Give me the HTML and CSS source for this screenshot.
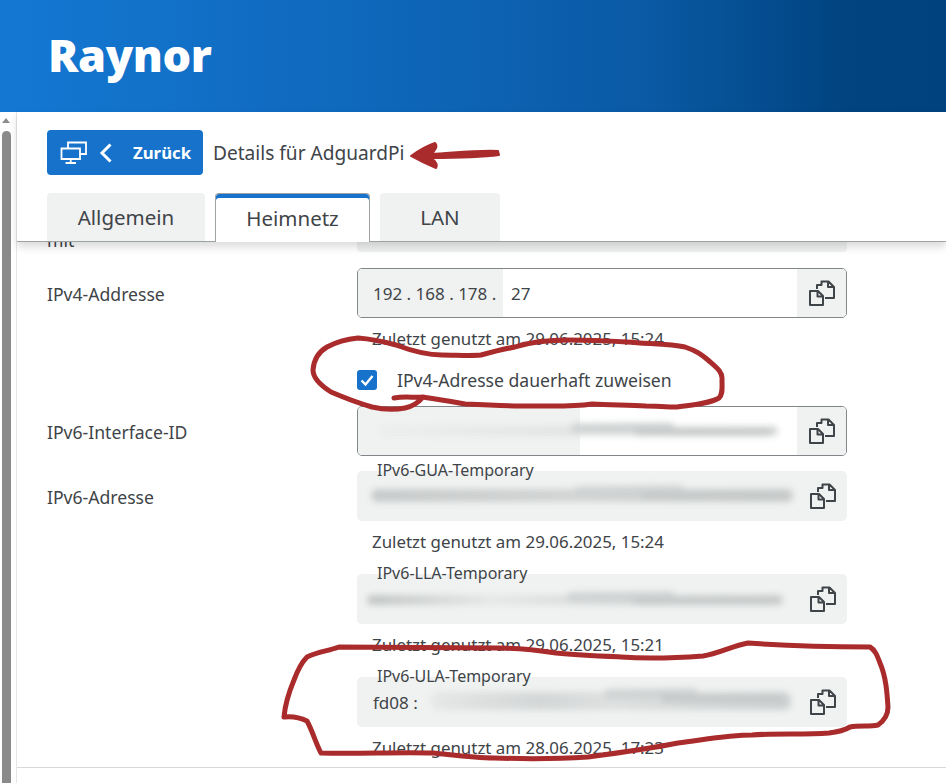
FILE: index.html
```html
<!DOCTYPE html>
<html lang="de">
<head>
<meta charset="utf-8">
<title>Raynor</title>
<link rel="stylesheet" href="styles.css">
</head>
<body>
<svg width="0" height="0" class="defs">
  <symbol id="copy" viewBox="0 0 28 26">
    <path d="M2 11h8l5 5v9H2z M9.500 11.500v5h5" fill="none" stroke="currentColor" stroke-width="2" stroke-linejoin="round"/>
    <path d="M9 9V5h4.500V1.500h7l5.500 5.500v11h-9 M20 2v5h5.500" fill="none" stroke="currentColor" stroke-width="2" stroke-linejoin="round"/>
  </symbol>
</svg>
<header class="banner"><h1 class="title">Raynor</h1></header>
<div class="page">
  <div class="scrollbar"><span class="arrow"></span><span class="thumb"></span></div>
  <main class="main">
    <div class="top">
      <div class="crumb">
        <button class="back" type="button">
          <svg class="net" viewBox="0 0 28 24" width="28" height="24"><path d="M8 7V1.500h18V13h-6 M1.500 7.500H20V18H1.500z M10.700 18v3.500 M5.500 22h10.500" fill="none" stroke="currentColor" stroke-width="1.800"/></svg>
          <svg class="chev" viewBox="0 0 14 20" width="14" height="20"><path d="M11.500 1.500 3 10l8.500 8.500" fill="none" stroke="currentColor" stroke-width="3"/></svg>
          <span class="back-text">Zurück</span>
        </button>
        <span class="crumb-text">Details für AdguardPi</span>
      </div>
      <nav class="tabs">
        <a class="tab tab-a">Allgemein</a>
        <a class="tab tab-b active">Heimnetz</a>
        <a class="tab tab-c">LAN</a>
      </nav>
    </div>
    <div class="scroll">
      <div class="row row-first">
        <div class="label">mit</div>
        <div class="col"><div class="stub"></div></div>
      </div>
      <div class="row">
        <div class="label">IPv4-Addresse</div>
        <div class="col">
          <div class="field outlined">
            <span class="prefix prefix-v4">192 . 168 . 178 .</span><span class="value">27</span>
            <span class="copy"><svg width="28" height="26"><use href="#copy"/></svg></span>
          </div>
          <div class="hint">Zuletzt genutzt am 29.06.2025, 15:24</div>
          <label class="check"><span class="box"><svg viewBox="0 0 20 20" width="20" height="20"><path d="M4.500 10.500 8.500 14.500 15.500 6" fill="none" stroke="#fff" stroke-width="2.400"/></svg></span>IPv4-Adresse dauerhaft zuweisen</label>
        </div>
      </div>
      <div class="row row-iid">
        <div class="label">IPv6-Interface-ID</div>
        <div class="col">
          <div class="field outlined">
            <span class="prefix prefix-iid"></span>
            <span class="smudge smudge-iid"></span>
            <span class="copy"><svg width="28" height="26"><use href="#copy"/></svg></span>
          </div>
        </div>
      </div>
      <div class="row row-v6">
        <div class="label label-v6">IPv6-Adresse</div>
        <div class="col">
          <div class="field filled">
            <span class="legend">IPv6-GUA-Temporary</span>
            <span class="smudge smudge-gua"></span>
            <span class="copy"><svg width="28" height="26"><use href="#copy"/></svg></span>
          </div>
          <div class="hint hint-v6">Zuletzt genutzt am 29.06.2025, 15:24</div>
          <div class="field filled">
            <span class="legend">IPv6-LLA-Temporary</span>
            <span class="smudge smudge-lla"></span>
            <span class="copy"><svg width="28" height="26"><use href="#copy"/></svg></span>
          </div>
          <div class="hint hint-v6">Zuletzt genutzt am 29.06.2025, 15:21</div>
          <div class="field filled">
            <span class="legend">IPv6-ULA-Temporary</span>
            <span class="value value-ula">fd08 :</span>
            <span class="smudge smudge-ula"></span>
            <span class="copy"><svg width="28" height="26"><use href="#copy"/></svg></span>
          </div>
          <div class="hint hint-v6">Zuletzt genutzt am 28.06.2025, 17:23</div>
        </div>
      </div>
    </div>
    <div class="foot"></div>
  </main>
</div>
<svg class="ink" width="946" height="783" viewBox="0 0 946 783">
  <g fill="none" stroke="#a92b2b" stroke-width="5" stroke-linecap="round" stroke-linejoin="round">
    <path d="M394 398C405 396 415 398 423 397C419 402 414 406 405 408C395 410 385 410 372 407C358 403 345 398 331 392C320 385 313 378 313 370C314 358 320 351 327 347C338 341 348 339 358 338C372 339 385 342 396 345C412 351 428 355 442 355C456 355 470 356 481 355C492 352 503 349 515 347C533 341 551 340 569 340C590 340 610 341 627 342C650 344 670 344 685 347C697 351 702 355 708 360C716 367 723 372 722 380C722 388 723 394 719 398C708 404 692 405 677 407C666 407 656 406 646 406C628 405 610 405 592 404C572 407 551 406 531 406C510 406 487 405 465 404C450 401 436 399 423 397"/>
    <path d="M339 647C328 651 317 652 307 657C300 664 297 672 294 680C289 692 285 705 284 717C292 716 301 718 307 721C313 732 316 744 321 753C358 754 396 752 433 753C453 755 473 758 494 758C526 759 557 759 588 757C618 753 648 749 678 743C703 740 727 735 752 735C778 733 804 735 829 733C838 732 845 730 850 727C860 725 869 727 878 725C885 720 888 714 888 707C887 692 886 677 880 663C877 655 875 650 870 647C830 647 789 646 748 643C732 646 718 654 703 656C676 658 648 659 621 657C600 656 578 655 556 653C537 650 518 648 499 648C446 648 392 647 339 647Z"/>
  </g>
  <path d="M498 151C475 150 453 153 431 154C436 150 438 146 435 143C426 146 418 151 411 156C418 160 426 164 436 168C438 165 436 161 430 158C453 158 477 158 499 155Z" fill="#a92b2b" stroke="#a92b2b" stroke-width="2" stroke-linejoin="round"/>
</svg>
</body>
</html>
```
FILE: styles.css
```css
* { box-sizing: border-box; }
html, body { margin: 0; height: 783px; overflow: hidden; }
body { position: relative; background: #fff; color: #3e4448; font-family: "Noto Sans", "Open Sans", sans-serif; font-size: 16px; }
.defs { position: absolute; }
.banner { height: 112px; background: linear-gradient(90deg, #1478d3 0%, #0e65b7 45%, #0a5aa5 68%, #00437f 90%, #00427d 100%); padding: 26px 0 0 48px; }
.title { margin: 0; color: #fff; font-size: 45px; line-height: 58px; font-weight: 900; letter-spacing: -0.4px; }
.page { display: flex; height: 671px; }
.scrollbar { width: 17px; flex: none; display: flex; flex-direction: column; align-items: center; padding: 6px 4px 0 0; border-right: 1px solid #e6e6e6; }
.arrow { width: 0; height: 0; border: 4px solid transparent; border-top-width: 0; border-bottom: 5px solid #8c8c8c; }
.thumb { width: 9px; flex: 1; margin-top: 8px; background: #8a8a8a; border-radius: 5px 5px 0 0; }
.main { flex: 1; min-width: 0; display: flex; flex-direction: column; }
.top { height: 130px; padding: 18px 0 0 30px; border-bottom: 1px solid #9da2a5; box-shadow: 0 5px 8px rgba(0, 0, 0, .14); position: relative; z-index: 1; background: #fff; }
.crumb { display: flex; align-items: center; height: 45px; }
.back { width: 156px; height: 45px; border: 0; border-radius: 4px; background: #1672cb; color: #fff; display: flex; align-items: center; padding: 0 0 0 13px; font: inherit; }
.net { flex: none; }
.chev { flex: none; margin-left: 11px; }
.back-text { margin-left: 20px; font-size: 16.800px; font-weight: 700; }
.crumb-text { margin-left: 10px; font-size: 19.100px; }
.tabs { display: flex; gap: 10px; margin-top: 18px; height: 48px; }
.tab { display: flex; align-items: center; justify-content: center; background: #f0f1f1; border-radius: 4px 4px 0 0; font-size: 20.500px; color: #3e4448; }
.tab-a { width: 158px; }
.tab-b { width: 155px; }
.tab-c { width: 120px; }
.tab.active { background: #fff; border: 1px solid #9da2a5; border-bottom: 0; box-shadow: inset 0 4px 0 #1672cb; height: 49px; position: relative; z-index: 1; }
.scroll { height: 525px; overflow: hidden; padding: 0 99px 0 30px; flex: none; }
.row { display: flex; }
.row-first { height: 27px; margin-top: -17px; margin-bottom: 16px; }
.label { width: 310px; flex: none; font-size: 17.600px; line-height: 22px; padding-top: 15px; }
.row-first .label { padding-top: 4px; }
.col { flex: 1; min-width: 0; }
.stub { height: 27px; background: #f0f1f1; border-radius: 0 0 4px 4px; }
.field { height: 50px; border-radius: 5px; display: flex; align-items: center; position: relative; }
.outlined { border: 1px solid #80868a; overflow: hidden; }
.filled { background: #f0f1f1; }
.prefix { height: 100%; display: flex; align-items: center; background: #f0f1f1; padding-left: 15px; font-size: 17px; white-space: pre; }
.prefix-v4 { width: 145px; }
.prefix-iid { width: 222px; }
.value { font-size: 17px; margin-left: 8px; }
.value-ula { margin-left: 16px; }
.copy { position: absolute; right: 0; top: 0; bottom: 0; width: 49px; display: flex; align-items: center; justify-content: center; background: #f0f1f1; color: #3e4448; }
.filled .copy { background: none; }
.hint { font-size: 16.900px; line-height: 20px; padding: 11px 0 0 15px; height: 40px; white-space: nowrap; }
.hint-v6 { height: 53px; padding-top: 11px; }
.check { display: flex; align-items: center; height: 24px; margin-top: 10px; font-size: 17.600px; }
.box { width: 20px; height: 20px; background: #1672cb; border-radius: 3px; margin-right: 20px; flex: none; display: flex; }
.row-iid { margin-top: 14px; }
.row-v6 { margin-top: 15px; }
.legend { position: absolute; left: 20px; top: -11px; font-size: 16px; line-height: 20px; }
.smudge { position: absolute; filter: blur(3px); border-radius: 8px; }
.smudge::before { content: ""; position: absolute; left: 48%; width: 26%; top: -3px; height: 9px; background: #cfd2d2; border-radius: 6px; transform: rotate(-.6deg); }
.smudge::after { content: ""; position: absolute; left: 64%; right: 2%; top: 3px; height: 7px; background: #c6c9c9; border-radius: 6px; }
.smudge-iid { left: 22px; right: 68px; top: 19px; height: 10px; background: linear-gradient(90deg, #eceded, #e4e6e6 40%, #dadcdc 70%, #d4d6d6); }
.smudge-gua { left: 14px; right: 54px; top: 18px; height: 13px; background: linear-gradient(90deg, #c8cbcb, #d3d5d5 50%, #c8caca); }
.smudge-lla { left: 10px; right: 64px; top: 21px; height: 10px; background: linear-gradient(90deg, #c2c5c5, #e6e8e8 30%, #d6d9d9 60%, #c8caca); }
.smudge-ula { left: 74px; right: 56px; top: 15px; height: 18px; background: linear-gradient(90deg, #e6e7e7, #d4d7d7 30%, #dee0e0 50%, #ccd0d0); }
.foot { border-top: 1px solid #d8d8d8; flex: 1; }
.ink { position: absolute; left: 0; top: 0; pointer-events: none; z-index: 2; }
```
